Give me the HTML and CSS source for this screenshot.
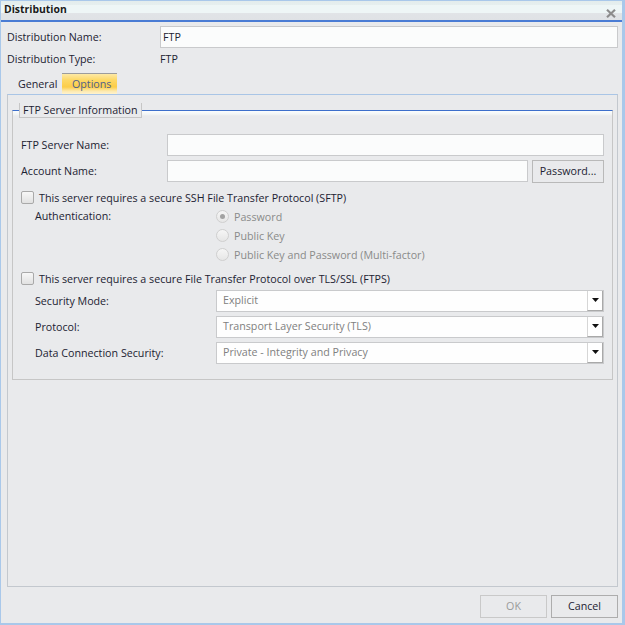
FILE: index.html
```html
<!DOCTYPE html>
<html>
<head>
<meta charset="utf-8">
<title>Distribution</title>
<link rel="stylesheet" href="styles.css">
</head>
<body>
<div class="win">
  <div class="titlebar">
    <span class="title">Distribution</span>
    <svg class="close" width="10" height="9" viewBox="0 0 10 9"><path d="M1 0.8 L9 8.2 M9 0.8 L1 8.2" stroke="#8c8c8c" stroke-width="2.2" fill="none"/></svg>
  </div>
  <div class="content">
    <div class="frow">
      <span class="flabel">Distribution Name:</span>
      <div class="input grow1">FTP</div>
    </div>
    <div class="frow">
      <span class="flabel">Distribution Type:</span>
      <span class="val">FTP</span>
    </div>
    <div class="tabs">
      <div class="tab">General</div>
      <div class="tab active">Options</div>
    </div>
    <div class="panel">
      <div class="group">
        <div class="legend">FTP Server Information</div>
        <div class="grow first">
          <span class="glabel">FTP Server Name:</span>
          <div class="input grow1"></div>
        </div>
        <div class="grow acct">
          <span class="glabel">Account Name:</span>
          <div class="input grow1"></div>
          <div class="btn pw">Password...</div>
        </div>
        <div class="check">
          <span class="cb"></span><span>This server requires a secure SSH File Transfer Protocol (SFTP)</span>
        </div>
        <div class="auth">
          <span class="sublabel">Authentication:</span>
          <div class="radios">
            <div class="radio"><span class="rb on"></span><span>Password</span></div>
            <div class="radio"><span class="rb"></span><span>Public Key</span></div>
            <div class="radio"><span class="rb"></span><span>Public Key and Password (Multi-factor)</span></div>
          </div>
        </div>
        <div class="check">
          <span class="cb"></span><span>This server requires a secure File Transfer Protocol over TLS/SSL (FTPS)</span>
        </div>
        <div class="srow first">
          <span class="sublabel">Security Mode:</span>
          <div class="select"><span class="stext">Explicit</span><span class="dd"><svg width="7" height="4" viewBox="0 0 7 4"><polygon points="0,0 7,0 3.5,4" fill="#111"/></svg></span></div>
        </div>
        <div class="srow">
          <span class="sublabel">Protocol:</span>
          <div class="select"><span class="stext">Transport Layer Security (TLS)</span><span class="dd"><svg width="7" height="4" viewBox="0 0 7 4"><polygon points="0,0 7,0 3.5,4" fill="#111"/></svg></span></div>
        </div>
        <div class="srow">
          <span class="sublabel">Data Connection Security:</span>
          <div class="select"><span class="stext">Private - Integrity and Privacy</span><span class="dd"><svg width="7" height="4" viewBox="0 0 7 4"><polygon points="0,0 7,0 3.5,4" fill="#111"/></svg></span></div>
        </div>
      </div>
    </div>
    <div class="footer">
      <div class="btn ok">OK</div>
      <div class="btn cancel">Cancel</div>
    </div>
  </div>
</div>
</body>
</html>
```
FILE: styles.css
```css
* { box-sizing: border-box; }
html, body { margin: 0; padding: 0; }
body {
  font-family: "Open Sans", "Liberation Sans", sans-serif;
  font-size: 10.7px;
  color: #1c2232;
  background: #e9eaec;
}
.win {
  width: 625px;
  height: 625px;
  display: flex;
  flex-direction: column;
  border-style: solid;
  border-color: #a9c8ea;
  border-width: 1px 3px 2px 1px;
  background: #e9eaec;
}
.titlebar {
  height: 21px;
  flex: none;
  display: flex;
  justify-content: space-between;
  align-items: flex-start;
  padding: 0 6px 0 3px;
  border-bottom: 2px solid #4a7cd4;
  background: linear-gradient(to bottom, #e3eded 0px, #e6efef 4px, #eef6f6 4px, #eef6f6 12px, #e1e4e7 12px, #dfe2e5 19px);
}
.title {
  font-weight: 700;
  font-size: 10.4px;
  line-height: 16px;
  color: #1a1a1a;
}
.close { margin-top: 8px; display: block; }
.content {
  flex: 1;
  display: flex;
  flex-direction: column;
  padding: 4px 4px 0 6px;
}
.frow {
  display: flex;
  align-items: center;
  height: 22px;
  flex: none;
}
.flabel { width: 153px; flex: none; }
.input {
  height: 22px;
  border: 1px solid #c9cacc;
  background: #fbfcfc;
  padding: 0 2px;
  line-height: 20px;
}
.grow1 { flex: 1; }
.tabs {
  display: flex;
  flex: none;
  height: 21px;
  margin-top: 3px;
}
.tab {
  width: 55px;
  padding-left: 10px;
  white-space: nowrap;
  line-height: 20px;
  border-top: 1px solid transparent;
}
.tab:first-child { padding-left: 11px; }
.tab.active {
  border-top-color: #9c9c9c;
  color: #50608a;
  background: linear-gradient(to bottom, #fde9a6 0%, #fdd866 30%, #fccd48 65%, #fde9ad 85%, #fff3cf 100%);
}
.panel {
  flex: 1;
  border: 1px solid #c3c8ce;
  border-top-color: #a9c5e6;
  padding: 15px 4px;
}
.group {
  border: 1px solid #c6c6c6;
  border-top-color: #3d6fcb;
  padding: 0 8px 15px 8px;
  background: linear-gradient(to bottom, #fbfdfd 0px, #f3f6f6 3px, #e9eaec 5px);
  display: flex;
  flex-direction: column;
}
.legend {
  align-self: flex-start;
  margin: -8px 0 0 -2px;
  height: 15px;
  line-height: 14px;
  padding: 0 3px;
  border: 1px solid #c6c6c6;
  border-top: none;
  background: #e9eaec;
}
.grow {
  display: flex;
  align-items: flex-start;
  height: 22px;
  margin-top: 4px;
}
.grow.first { margin-top: 16px; }
.grow.acct { height: 23px; }
.glabel { width: 146px; flex: none; line-height: 22px; }
.btn {
  height: 23px;
  border: 1px solid #b9b9b9;
  background: #e9eaec;
  text-align: center;
  line-height: 21px;
}
.pw { width: 72px; margin-left: 4px; }
.check {
  display: flex;
  align-items: center;
  height: 19px;
  margin-top: 5px;
}
.cb {
  width: 13px;
  height: 13px;
  flex: none;
  border: 1px solid #a9a9a9;
  border-radius: 2px;
  background: linear-gradient(to bottom, #f7f7f7, #e1e1e1);
  margin-right: 5px;
}
.auth { display: flex; }
.sublabel { width: 181px; margin-left: 14px; flex: none; line-height: 19px; }
.radio {
  display: flex;
  align-items: center;
  height: 19px;
  color: #8a8a8a;
}
.rb {
  width: 13px;
  height: 13px;
  flex: none;
  border-radius: 50%;
  border: 1px solid #cfcfcf;
  background: linear-gradient(to bottom, #f6f6f6, #e6e6e6);
  margin-right: 5px;
  display: flex;
  align-items: center;
  justify-content: center;
}
.rb.on::after {
  content: "";
  width: 5px;
  height: 5px;
  border-radius: 50%;
  background: #a2a2a2;
}
.srow {
  display: flex;
  align-items: center;
  height: 22px;
  margin-top: 4px;
}
.srow.first { margin-top: 2px; }
.select {
  flex: 1;
  height: 22px;
  display: flex;
  border: 1px solid #c9cacc;
  background: #fefefe;
}
.stext {
  flex: 1;
  padding-left: 6px;
  line-height: 19px;
  color: #808080;
}
.dd {
  width: 16px;
  flex: none;
  display: flex;
  align-items: center;
  justify-content: center;
  padding-bottom: 2px;
  background: #fff;
  border-left: 1px solid #d6d6d6;
  border-right: 1px solid #a9a9a9;
  border-bottom: 1px solid #a9a9a9;
}
.dd svg { display: block; }
.footer {
  display: flex;
  flex: none;
  justify-content: flex-end;
  margin: 8px 0 5px;
  height: 23px;
}
.ok { width: 67px; border-color: #c9c9c9; color: #9a9a9a; }
.cancel { width: 67px; margin-left: 4px; border-color: #adadad; color: #1c2232; }
```
